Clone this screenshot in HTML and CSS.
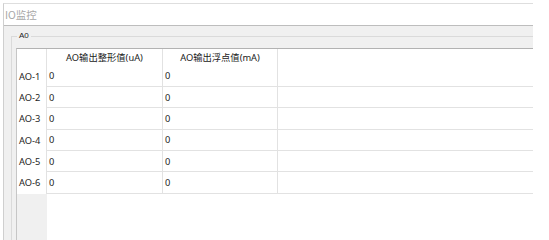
FILE: index.html
```html
<!DOCTYPE html>
<html lang="zh-CN">
<head>
<meta charset="utf-8">
<title>IO监控</title>
<link rel="stylesheet" href="styles.css">
</head>
<body>
<div class="window">
  <div class="titlebar">IO监控</div>
  <div class="content">
    <fieldset class="group">
      <legend class="group-label">A0</legend>
      <div class="grid">
        <div class="corner"></div>
        <div class="hcell">AO输出整形值(uA)</div>
        <div class="hcell">AO输出浮点值(mA)</div>
        <div class="hfill"></div>

        <div class="rh">AO-1</div><div class="cell">0</div><div class="cell">0</div><div class="fill"></div>
        <div class="rh">AO-2</div><div class="cell">0</div><div class="cell">0</div><div class="fill"></div>
        <div class="rh">AO-3</div><div class="cell">0</div><div class="cell">0</div><div class="fill"></div>
        <div class="rh">AO-4</div><div class="cell">0</div><div class="cell">0</div><div class="fill"></div>
        <div class="rh">AO-5</div><div class="cell">0</div><div class="cell">0</div><div class="fill"></div>
        <div class="rh">AO-6</div><div class="cell">0</div><div class="cell">0</div><div class="fill"></div>

        <div class="rh-empty"></div>
        <div class="empty"></div>
      </div>
    </fieldset>
  </div>
</div>
</body>
</html>
```

FILE: styles.css
```css
html, body {
  margin: 0;
  padding: 0;
  height: 100%;
  background: #ffffff;
  overflow: hidden;
}

body {
  font-family: "Noto Sans", "Noto Sans CJK SC", sans-serif;
  color: #1e1e1e;
}

.window {
  margin: 3px 0 0 3px;
  width: 530px;
  height: calc(100% - 3px);
  box-sizing: border-box;
  border-top: 1px solid #dedede;
  border-left: 1px solid #cfcfcf;
  display: flex;
  flex-direction: column;
}

.titlebar {
  height: 21px;
  line-height: 21px;
  padding-left: 1px;
  font-family: "Noto Sans CJK SC", "Noto Sans", sans-serif;
  font-size: 10.5px;
  color: #a8a8a8;
  background: #ffffff;
  flex: none;
}

.content {
  flex: 1;
  background: #f0f0f0;
  border-top: 1px solid #bdbdbd;
  padding: 5px 0 0 7px;
  display: flex;
  flex-direction: column;
}

.group {
  flex: 1;
  margin: 0;
  padding: 7px 0 0 4px;
  border: none;
  border-top: 1px solid #dadada;
  border-left: 1px solid #dadada;
  min-inline-size: 0;
  display: flex;
  flex-direction: column;
}

.group-label {
  margin-left: 1px;
  padding: 0 2px;
  height: 10px;
  line-height: 10px;
  font-family: "Liberation Sans", "DejaVu Sans", sans-serif;
  font-size: 8px;
  color: #222222;
}

.grid {
  flex: 1;
  display: grid;
  grid-template-columns: 30px 116px 115px 1fr;
  grid-template-rows: 16.5px repeat(6, 21.35px) 1fr;
  border-top: 1px solid #b2b2b2;
  border-left: 1px solid #c6c6c6;
  background: #ffffff;
  font-size: 9.3px;
}

.corner {
  background: #ffffff;
  border-right: 1px solid #e2e2e2;
}

.hcell {
  box-sizing: border-box;
  border-right: 1px solid #e2e2e2;
  text-align: center;
  padding-top: 2px;
  line-height: 14px;
  color: #222222;
}

.hfill {
  background: #ffffff;
}

.rh {
  box-sizing: border-box;
  border-right: 1px solid #e2e2e2;
  padding-left: 2px;
  display: flex;
  align-items: center;
  background: #ffffff;
  white-space: nowrap;
}

.cell {
  box-sizing: border-box;
  border-right: 1px solid #e2e2e2;
  border-bottom: 1px solid #e2e2e2;
  padding-left: 2px;
  display: flex;
  align-items: center;
}

.fill {
  border-bottom: 1px solid #e2e2e2;
}

.rh-empty {
  background: #f0f0f0;
}

.empty {
  grid-column: 2 / 5;
  background: #ffffff;
}
```
